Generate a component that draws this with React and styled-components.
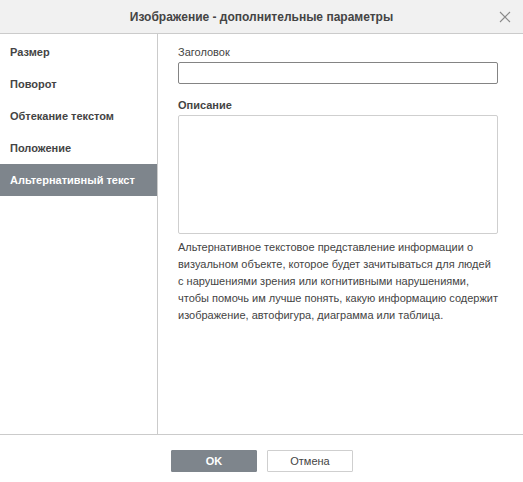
import React from 'react';
import styled, { createGlobalStyle } from 'styled-components';

const GlobalStyle = createGlobalStyle`
  html, body {
    margin: 0;
    padding: 0;
    background: #fff;
  }
  body {
    font-family: "Liberation Sans", Arial, Helvetica, sans-serif;
    font-size: 11px;
    color: #444;
  }
`;

const menuItems = ['Размер', 'Поворот', 'Обтекание текстом', 'Положение', 'Альтернативный текст'];

const hintLines = [
  'Альтернативное текстовое представление информации о',
  'визуальном объекте, которое будет зачитываться для людей',
  'с нарушениями зрения или когнитивными нарушениями,',
  'чтобы помочь им лучше понять, какую информацию содержит',
  'изображение, автофигура, диаграмма или таблица.',
];

const App = () => (
  <>
    <GlobalStyle />
    <Dialog>
      <Header>
        <Title>Изображение - дополнительные параметры</Title>
        <CloseBtn type="button" aria-label="Закрыть">
          <svg width="12" height="12" viewBox="0 0 12 12">
            <path d="M1 1 L11 11 M11 1 L1 11" stroke="#8a8a8a" strokeWidth="1.1" fill="none" />
          </svg>
        </CloseBtn>
      </Header>
      <Body>
        <Sidebar>
          {menuItems.map((item, i) => (
            <MenuItem key={item} active={i === menuItems.length - 1}>{item}</MenuItem>
          ))}
        </Sidebar>
        <Content>
          <Label>Заголовок</Label>
          <TitleInput type="text" autoFocus />
          <Label $top $bold>Описание</Label>
          <DescArea />
          <Hint>
            {hintLines.map((line) => (
              <HintLine key={line}>{line}</HintLine>
            ))}
          </Hint>
        </Content>
      </Body>
      <Footer>
        <Button primary type="button">OK</Button>
        <Button type="button">Отмена</Button>
      </Footer>
    </Dialog>
  </>
);

const Dialog = styled.div`
  width: 523px;
  height: 482px;
  display: flex;
  flex-direction: column;
  background: #fff;
  box-sizing: border-box;
`;

const Header = styled.div`
  height: 33px;
  flex-shrink: 0;
  background: #f1f1f1;
  border-bottom: 1px solid #cbcbcb;
  display: flex;
  align-items: center;
  justify-content: center;
  position: relative;
`;

const Title = styled.div`
  font-weight: bold;
  font-size: 12px;
  color: #444;
`;

const CloseBtn = styled.button`
  position: absolute;
  right: 12px;
  top: 11px;
  width: 12px;
  height: 12px;
  padding: 0;
  border: none;
  background: transparent;
  display: flex;
`;

const Body = styled.div`
  flex: 1;
  display: flex;
  border-bottom: 1px solid #cbcbcb;
`;

const Sidebar = styled.div`
  width: 157px;
  flex-shrink: 0;
  border-right: 1px solid #cbcbcb;
  padding-top: 2px;
`;

const MenuItem = styled.div.withConfig({ shouldForwardProp: (p) => p !== 'active' })`
  height: 32px;
  line-height: 32px;
  padding-left: 10px;
  font-weight: bold;
  font-size: 11px;
  color: ${({ active }) => (active ? '#fff' : '#444')};
  background: ${({ active }) => (active ? '#7e858c' : 'transparent')};
`;

const Content = styled.div`
  flex: 1;
  padding: 11px 26px 0 20px;
  display: flex;
  flex-direction: column;
`;

const Label = styled.div`
  font-weight: ${({ $bold }) => ($bold ? 'bold' : 'normal')};
  font-size: 11px;
  line-height: 14px;
  margin-bottom: 3px;
  margin-top: ${({ $top }) => ($top ? '14px' : '0')};
`;

const TitleInput = styled.input`
  box-sizing: border-box;
  width: 100%;
  height: 22px;
  border: 1px solid #848484;
  border-radius: 2px;
  padding: 0 3px;
  font-family: inherit;
  font-size: 11px;
  outline: none;
`;

const DescArea = styled.textarea`
  box-sizing: border-box;
  width: 100%;
  height: 119px;
  border: 1px solid #cfcfcf;
  border-radius: 2px;
  resize: none;
  font-family: inherit;
  font-size: 11px;
  outline: none;
  display: block;
`;

const Hint = styled.div`
  margin-top: 5px;
  font-size: 11px;
  line-height: 17px;
  color: #444;
`;

const HintLine = styled.div`
  white-space: nowrap;
`;

const Footer = styled.div`
  height: 47px;
  flex-shrink: 0;
  display: flex;
  justify-content: center;
  align-items: flex-start;
  gap: 10px;
  padding-top: 15px;
  padding-left: 1px;
  box-sizing: border-box;
`;

const Button = styled.button.withConfig({ shouldForwardProp: (p) => p !== 'primary' })`
  width: 86px;
  height: 22px;
  box-sizing: border-box;
  border-radius: 1px;
  font-family: "Liberation Sans", Arial, sans-serif;
  font-size: 11px;
  font-weight: ${({ primary }) => (primary ? 'bold' : 'normal')};
  color: ${({ primary }) => (primary ? '#fff' : '#444')};
  background: ${({ primary }) => (primary ? '#7e858c' : '#fff')};
  border: 1px solid ${({ primary }) => (primary ? '#7e858c' : '#cfcfcf')};
  padding: 0;
`;

export default App;
